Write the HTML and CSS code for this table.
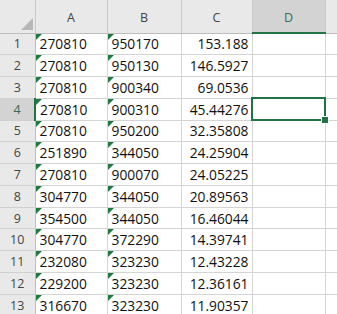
FILE: index.html
```html
<!DOCTYPE html>
<html lang="en">
<head>
  <meta charset="UTF-8">
  <meta name="viewport" content="width=device-width, initial-scale=1.0">
  <title>Sheet1</title>
  <link rel="stylesheet" href="styles.css">
</head>
<body>
  <table class="sheet">
    <colgroup>
      <col class="col-rh">
      <col class="col-a">
      <col class="col-b">
      <col class="col-c">
      <col class="col-d">
      <col class="col-e">
    </colgroup>
    <thead>
      <tr>
        <th class="corner"><span class="corner-tri"></span></th>
        <th>A</th>
        <th>B</th>
        <th>C</th>
        <th class="active">D</th>
        <th></th>
      </tr>
    </thead>
    <tbody>
      <tr><th>1</th><td class="txt">270810</td><td class="txt">950170</td><td class="num">153.188</td><td></td><td></td></tr>
      <tr><th>2</th><td class="txt">270810</td><td class="txt">950130</td><td class="num">146.5927</td><td></td><td></td></tr>
      <tr><th>3</th><td class="txt">270810</td><td class="txt">900340</td><td class="num">69.0536</td><td></td><td></td></tr>
      <tr><th class="active">4</th><td class="txt">270810</td><td class="txt">900310</td><td class="num">45.44276</td><td class="selected"><span class="sel-box"><span class="sel-handle"></span></span></td><td></td></tr>
      <tr><th>5</th><td class="txt">270810</td><td class="txt">950200</td><td class="num">32.35808</td><td></td><td></td></tr>
      <tr><th>6</th><td class="txt">251890</td><td class="txt">344050</td><td class="num">24.25904</td><td></td><td></td></tr>
      <tr><th>7</th><td class="txt">270810</td><td class="txt">900070</td><td class="num">24.05225</td><td></td><td></td></tr>
      <tr><th>8</th><td class="txt">304770</td><td class="txt">344050</td><td class="num">20.89563</td><td></td><td></td></tr>
      <tr><th>9</th><td class="txt">354500</td><td class="txt">344050</td><td class="num">16.46044</td><td></td><td></td></tr>
      <tr><th>10</th><td class="txt">304770</td><td class="txt">372290</td><td class="num">14.39741</td><td></td><td></td></tr>
      <tr><th>11</th><td class="txt">232080</td><td class="txt">323230</td><td class="num">12.43228</td><td></td><td></td></tr>
      <tr><th>12</th><td class="txt">229200</td><td class="txt">323230</td><td class="num">12.36161</td><td></td><td></td></tr>
      <tr><th>13</th><td class="txt">316670</td><td class="txt">323230</td><td class="num">11.90357</td><td></td><td></td></tr>
    </tbody>
  </table>
</body>
</html>
```

FILE: styles.css
```css
body {
  margin: 0;
  padding: 0;
  background: #fff;
  overflow: hidden;
  font-family: 'Open Sans', 'Noto Sans', sans-serif;
}
.sheet {
  border-collapse: collapse;
  table-layout: fixed;
  width: 337px;
}
.col-rh { width: 35px; }
.col-a { width: 72px; }
.col-b { width: 74px; }
.col-c { width: 71px; }
.col-d { width: 73px; }
.col-e { width: 12px; }
thead th {
  height: 30px;
  padding: 2px 0 0;
  background: #e9e9e9;
  color: #444;
  font-size: 12.5px;
  font-weight: normal;
  border-left: 1px solid #c9c9c9;
  border-right: 1px solid #c9c9c9;
  border-bottom: 1px solid #bdbdbd;
  border-top: none;
}
thead th.corner {
  position: relative;
  border-left: none;
}
.corner-tri {
  position: absolute;
  right: 2px;
  bottom: 3px;
  width: 0;
  height: 0;
  border-left: 12px solid transparent;
  border-bottom: 12px solid #b7b7b7;
}
thead th.active {
  background: #d3d3d3;
  color: #3d6b4f;
  border-bottom: 2px solid #217346;
}
tbody tr {
  height: 21.77px;
}
tbody th {
  padding: 0;
  background: #e9e9e9;
  color: #444;
  font-size: 12.5px;
  font-weight: normal;
  text-align: center;
  border-right: 1px solid #bdbdbd;
  border-bottom: 1px solid #d0d0d0;
  border-left: none;
}
tbody th.active {
  background: #d3d3d3;
  color: #3d6b4f;
  border-right: 2px solid #217346;
}
td {
  padding: 1px 3px 0;
  font-size: 13.8px;
  color: #111;
  border: 1px solid #d4d4d4;
  white-space: nowrap;
  overflow: hidden;
  line-height: 18px;
}
td.txt {
  position: relative;
  text-align: left;
  padding-left: 4px;
}
td.txt::before {
  content: '';
  position: absolute;
  top: 0;
  left: 0;
  width: 0;
  height: 0;
  border-top: 6px solid #1f7a3f;
  border-right: 6px solid transparent;
}
td.num {
  text-align: right;
}
td.selected {
  position: relative;
  overflow: visible;
}
.sel-box {
  position: absolute;
  left: -2px;
  top: -2px;
  right: -1px;
  bottom: -1px;
  border: 2px solid #217346;
}
.sel-handle {
  position: absolute;
  right: -5px;
  bottom: -5px;
  width: 6px;
  height: 6px;
  background: #217346;
  border: 1px solid #fff;
}
```
